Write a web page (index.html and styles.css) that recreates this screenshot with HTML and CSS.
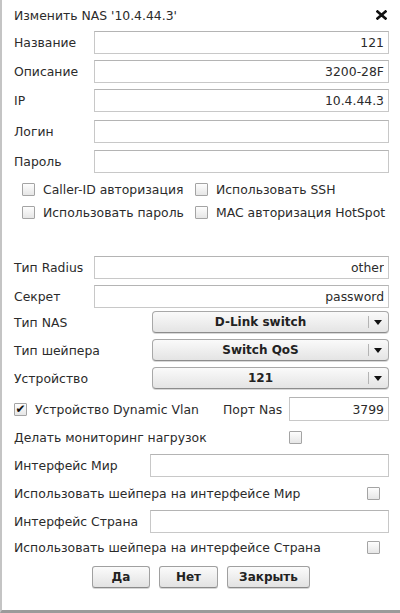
FILE: index.html
```html
<!DOCTYPE html>
<html lang="ru">
<head>
<meta charset="utf-8">
<title>Изменить NAS</title>
<link rel="stylesheet" href="styles.css">
</head>
<body>
<div class="dialog">
  <div class="head">
    <span class="title">Изменить NAS '10.4.44.3'</span>
    <svg class="close" width="11" height="10" viewBox="0 0 11 10"><path d="M1.5 1.5 L9.5 8.5 M9.5 1.5 L1.5 8.5" stroke="#111" stroke-width="2.6" stroke-linecap="square"/></svg>
  </div>

  <div class="row r1"><label class="lbl">Название</label><input class="field" value="121"></div>
  <div class="row r2"><label class="lbl">Описание</label><input class="field" value="3200-28F"></div>
  <div class="row r3"><label class="lbl">IP</label><input class="field" value="10.4.44.3"></div>
  <div class="row r4"><label class="lbl">Логин</label><input class="field" value=""></div>
  <div class="row r5"><label class="lbl">Пароль</label><input class="field" value=""></div>

  <div class="checks">
    <div class="chk"><span class="box"></span>Caller-ID авторизация</div>
    <div class="chk"><span class="box"></span>Использовать SSH</div>
    <div class="chk"><span class="box"></span>Использовать пароль</div>
    <div class="chk"><span class="box"></span>MAC авторизация HotSpot</div>
  </div>

  <div class="row r6"><label class="lbl">Тип Radius</label><input class="field" value="other"></div>
  <div class="row r7"><label class="lbl">Секрет</label><input class="field" value="password"></div>

  <div class="row sel-row s1"><label class="lbl">Тип NAS</label><div class="select"><span class="sel-text">D-Link switch</span><span class="sel-arrow"></span></div></div>
  <div class="row sel-row s2"><label class="lbl">Тип шейпера</label><div class="select"><span class="sel-text">Switch QoS</span><span class="sel-arrow"></span></div></div>
  <div class="row sel-row s3"><label class="lbl">Устройство</label><div class="select"><span class="sel-text">121</span><span class="sel-arrow"></span></div></div>

  <div class="row vlan">
    <div class="chk"><span class="box checked">✔</span>Устройство Dynamic Vlan</div>
    <label class="port-lbl">Порт Nas</label>
    <input class="field port" value="3799">
  </div>

  <div class="row opt mon"><span class="opt-text">Делать мониторинг нагрузок</span><span class="box mon-box"></span></div>

  <div class="row wide w1"><label class="lbl">Интерфейс Мир</label><input class="field" value=""></div>
  <div class="row opt o1"><span class="opt-text">Использовать шейпера на интерфейсе Мир</span><span class="box end-box"></span></div>
  <div class="row wide w2"><label class="lbl">Интерфейс Страна</label><input class="field" value=""></div>
  <div class="row opt o2"><span class="opt-text">Использовать шейпера на интерфейсе Страна</span><span class="box end-box"></span></div>

  <div class="buttons">
    <button class="btn b-yes">Да</button>
    <button class="btn b-no">Нет</button>
    <button class="btn b-close">Закрыть</button>
  </div>
</div>
</body>
</html>
```

FILE: styles.css
```css
html, body {
  margin: 0;
  padding: 0;
  background: #fff;
}

.dialog {
  width: 400px;
  height: 613px;
  box-sizing: border-box;
  border-left: 2px solid #c4c4c4;
  border-bottom: 3px solid #9a9a9a;
  padding: 0 11px 0 12px;
  font-family: "DejaVu Sans", Verdana, sans-serif;
  font-size: 12.4px;
  color: #2b2b2b;
  display: flex;
  flex-direction: column;
}

.head {
  height: 31px;
  display: flex;
  align-items: center;
  justify-content: space-between;
  padding-right: 2px;
}
.close { margin-top: -1px; }

.row {
  display: flex;
  align-items: center;
  height: 23px;
}
.lbl {
  width: 80px;
  flex: none;
}
.field {
  flex: 1;
  min-width: 0;
  height: 23px;
  box-sizing: border-box;
  border: 1px solid #c8c8c8;
  border-top-color: #b4b4b4;
  padding: 0 4px;
  margin: 0;
  text-align: right;
  font-family: inherit;
  font-size: 12.4px;
  color: #2b2b2b;
  background: #fff;
  outline: none;
}

.r2 { margin-top: 6px; }
.r3 { margin-top: 6px; }
.r4 { margin-top: 8px; }
.r5 { margin-top: 7px; }

.checks {
  margin-top: 5px;
  padding-left: 8px;
  display: grid;
  grid-template-columns: 173px auto;
  grid-auto-rows: 23px;
}
.chk {
  display: flex;
  align-items: center;
  gap: 8px;
  white-space: nowrap;
}

.box {
  width: 13px;
  height: 13px;
  box-sizing: border-box;
  border: 1px solid #a4a4a4;
  border-radius: 1px;
  background: linear-gradient(#fdfdfd, #e6e6e6);
  flex: none;
  display: inline-flex;
  align-items: center;
  justify-content: center;
}
.box.checked {
  font-size: 12px;
  line-height: 1;
  color: #111;
  font-weight: bold;
}

.r6 { margin-top: 32px; }
.r7 { margin-top: 6px; }

.sel-row { height: 22px; }
.s1 { margin-top: 3px; }
.s2 { margin-top: 6px; }
.s3 { margin-top: 6px; }
.sel-row .lbl { width: 138px; }
.select {
  flex: 1;
  height: 22px;
  box-sizing: border-box;
  border: 1px solid #a8a8a8;
  border-bottom-color: #8c8c8c;
  border-radius: 4px;
  background: linear-gradient(#fafafa, #e4e4e4);
  display: flex;
  align-items: center;
  box-shadow: 0 1px 0 #d8d8d8;
}
.sel-text {
  flex: 1;
  text-align: center;
  font-weight: bold;
  font-size: 12px;
  color: #222;
}
.sel-arrow {
  width: 19px;
  height: 12px;
  border-left: 1px solid #b4b4b4;
  position: relative;
  flex: none;
}
.sel-arrow::after {
  content: "";
  position: absolute;
  left: 5px;
  top: 4px;
  border-left: 4px solid transparent;
  border-right: 4px solid transparent;
  border-top: 5px solid #111;
}

.vlan {
  margin-top: 8px;
  height: 24px;
}
.vlan .field { height: 24px; }
.vlan .chk { width: 210px; }
.port-lbl { width: 66px; flex: none; }
.field.port { flex: none; width: 100px; }

.opt { justify-content: space-between; }
.mon { margin-top: 5px; }
.mon .opt-text { width: 275px; }
.mon-box { margin-right: auto; }

.wide .lbl { width: 136px; }
.w1 { margin-top: 5px; }
.o1 { margin-top: 5px; }
.w2 { margin-top: 5px; }
.o2 { margin-top: 3px; }
.end-box { margin-right: 9px; }

.buttons {
  margin-top: 7px;
  display: flex;
  gap: 9px;
  padding-left: 78px;
}
.btn {
  height: 22px;
  box-sizing: border-box;
  border: 1px solid #a0a0a0;
  border-bottom-color: #8a8a8a;
  border-radius: 3px;
  background: linear-gradient(#fbfbfb, #e2e2e2);
  font-family: inherit;
  font-size: 12px;
  font-weight: bold;
  color: #222;
  padding: 0;
  box-shadow: 0 1px 0 #d6d6d6;
}
.b-yes { width: 58px; }
.b-no { width: 59px; }
.b-close { width: 83px; }
```
